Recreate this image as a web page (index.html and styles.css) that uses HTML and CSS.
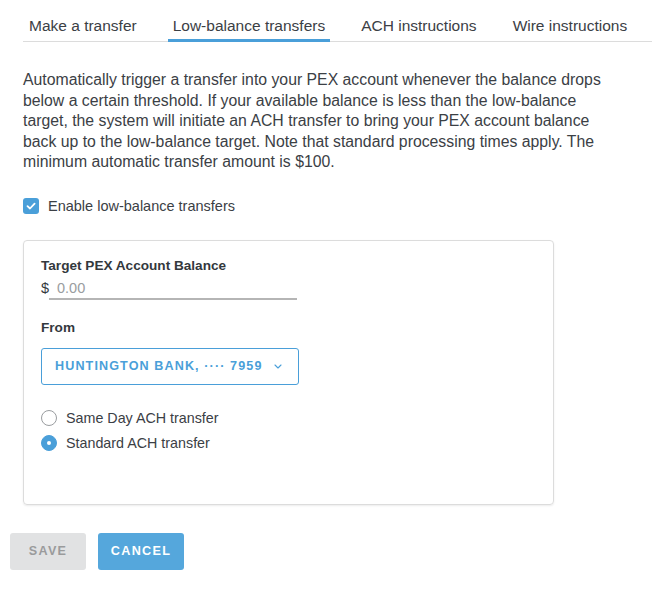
FILE: index.html
```html
<!DOCTYPE html>
<html lang="en">
<head>
<meta charset="utf-8">
<title>Low-balance transfers</title>
<link rel="stylesheet" href="styles.css">
</head>
<body>
<div class="page">
  <nav class="tabs">
    <div class="tab">Make a transfer</div>
    <div class="tab active">Low-balance transfers</div>
    <div class="tab">ACH instructions</div>
    <div class="tab">Wire instructions</div>
  </nav>

  <p class="intro">Automatically trigger a transfer into your PEX account whenever the balance drops below a certain threshold. If your available balance is less than the low-balance target, the system will initiate an ACH transfer to bring your PEX account balance back up to the low-balance target. Note that standard processing times apply. The minimum automatic transfer amount is $100.</p>

  <label class="check-row">
    <span class="checkbox">
      <svg width="10" height="8" viewBox="0 0 10 8"><polyline points="1.5,4.2 4,6.5 8.6,1.6" fill="none" stroke="#fff" stroke-width="1.8" stroke-linecap="round" stroke-linejoin="round"/></svg>
    </span>
    <span>Enable low-balance transfers</span>
  </label>

  <section class="card">
    <div class="field-label">Target PEX Account Balance</div>
    <div class="amount-row">
      <span class="currency">$</span>
      <span class="amount-input">0.00</span>
    </div>

    <div class="field-label from-label">From</div>
    <div class="select">
      <span class="select-text">HUNTINGTON BANK, ···· 7959</span>
      <svg class="chevron" width="8" height="5" viewBox="0 0 8 5"><polyline points="1,1 4,4 7,1" fill="none" stroke="#4a9fd9" stroke-width="1.1" stroke-linecap="round" stroke-linejoin="round"/></svg>
    </div>

    <div class="radios">
      <div class="radio-row"><span class="radio"></span><span>Same Day ACH transfer</span></div>
      <div class="radio-row"><span class="radio checked"></span><span>Standard ACH transfer</span></div>
    </div>
  </section>

  <div class="actions">
    <button class="btn btn-save">SAVE</button>
    <button class="btn btn-cancel">CANCEL</button>
  </div>
</div>
</body>
</html>
```

FILE: styles.css
```css
html, body {
  margin: 0;
  padding: 0;
  background: #fff;
}

body {
  font-family: "Liberation Sans", Arial, sans-serif;
  color: #3b4045;
  font-size: 15px;
}

.page {
  padding-left: 23px;
}

.tabs {
  display: flex;
  gap: 26px;
  padding-left: 1px;
  border-bottom: 1px solid #dcdcdc;
}

.tab {
  padding: 17px 5px 4px;
  line-height: 18px;
  font-size: 15.5px;
  color: #3b4045;
  border-bottom: 3px solid transparent;
  margin-bottom: -1px;
  white-space: nowrap;
}

.tab.active {
  border-bottom-color: #4a9fd9;
}

.intro {
  margin: 28px 0 0;
  width: 586px;
  line-height: 20.6px;
  font-size: 15.8px;
}

.check-row {
  display: flex;
  align-items: center;
  gap: 9px;
  margin-top: 23px;
  line-height: 20px;
  font-size: 14.5px;
}

.checkbox {
  width: 16px;
  height: 16px;
  border-radius: 3px;
  background: #4a9fd9;
  display: flex;
  align-items: center;
  justify-content: center;
}

.card {
  margin-top: 24px;
  width: 531px;
  box-sizing: border-box;
  padding: 16px 17px 51px;
  border: 1px solid #dcdcdc;
  border-radius: 4px;
  box-shadow: 0 1px 2px rgba(0, 0, 0, 0.08);
}

.field-label {
  font-weight: bold;
  font-size: 13.6px;
  line-height: 18px;
  color: #33383d;
}

.amount-row {
  display: flex;
  align-items: flex-end;
  margin-top: 4px;
  font-size: 14.5px;
  line-height: 18px;
}

.currency {
  width: 8px;
  padding-bottom: 3px;
  color: #33383d;
}

.amount-input {
  width: 240px;
  padding: 0 0 1px 8px;
  border-bottom: 2px solid #b5b5b5;
  color: #9a9da0;
}

.from-label {
  margin-top: 19px;
}

.select {
  margin-top: 11px;
  width: 258px;
  height: 37px;
  box-sizing: border-box;
  border: 1px solid #4a9fd9;
  border-radius: 3px;
  display: flex;
  align-items: center;
  padding-left: 13px;
}

.select-text {
  color: #4a9fd9;
  font-weight: bold;
  font-size: 12.6px;
  letter-spacing: 1.1px;
  white-space: nowrap;
}

.chevron {
  margin-left: 11px;
}

.radios {
  margin-top: 23px;
  display: flex;
  flex-direction: column;
  gap: 5px;
}

.radio-row {
  display: flex;
  align-items: center;
  gap: 9px;
  line-height: 20px;
  font-size: 14.3px;
}

.radio {
  width: 16px;
  height: 16px;
  box-sizing: border-box;
  border-radius: 50%;
  border: 1px solid #9a9da0;
  background: #fff;
  display: flex;
  align-items: center;
  justify-content: center;
}

.radio.checked {
  border-color: #4a9fd9;
  background: #4a9fd9;
}

.radio.checked::after {
  content: "";
  width: 4px;
  height: 4px;
  border-radius: 50%;
  background: #fff;
}

.actions {
  display: flex;
  gap: 12px;
  margin: 28px 0 0 -13px;
}

.btn {
  height: 37px;
  border: none;
  border-radius: 3px;
  font-family: "Liberation Sans", Arial, sans-serif;
  font-weight: bold;
  font-size: 12.6px;
  letter-spacing: 1.3px;
  padding: 0;
}

.btn-save {
  width: 76px;
  background: #e1e2e3;
  color: #9a9b9c;
}

.btn-cancel {
  width: 86px;
  background: #55a7dc;
  color: #fff;
}
```
